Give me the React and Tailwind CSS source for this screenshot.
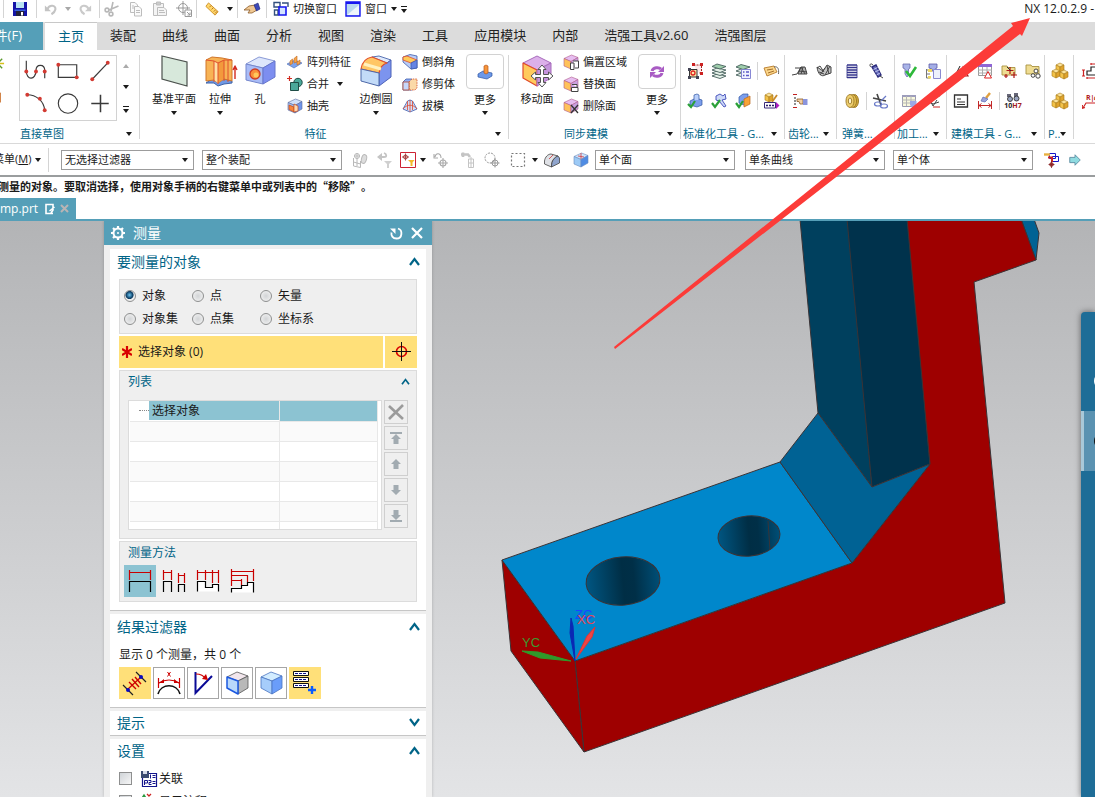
import React, { useState } from "react";

/* cube used by many of the modelling icons */
const Cube = ({ top = "#dbe8ff", left = "#a9c4fb", right = "#6f8ff0", line = "#5a6a9a" }) => (
  <g stroke={line} strokeWidth="0.6" strokeLinejoin="round">
    <path d="M1 4.500 L8.500 1 L15 3.500 L8 7.500 Z" fill={top} />
    <path d="M1 4.500 L8 7.500 L8 15 L1 12 Z" fill={left} />
    <path d="M8 7.500 L15 3.500 L15 11 L8 15 Z" fill={right} />
  </g>
);

const MiniCube = ({ x, y, fill = "#f3c34a" }) => (
  <g transform={`translate(${x} ${y})`} stroke="#a87a1a" strokeWidth="0.6" strokeLinejoin="round">
    <path d="M0 2 L4 0 L8 2 L4 4 Z" fill="#fbe39a" />
    <path d="M0 2 L4 4 L4 9 L0 7 Z" fill={fill} />
    <path d="M4 4 L8 2 L8 7 L4 9 Z" fill="#dfa32c" />
  </g>
);

const icons = {
  save: (
    <g>
      <path d="M1 1 H15 V15 H1 Z" fill="#1414a8" />
      <path d="M4 1 H12 V7 H4 Z" fill="#b9e4f2" />
      <path d="M2.500 8.500 H13.500 V10 H2.500 Z" fill="#3b66e0" />
      <path d="M4 10 H12 V15 H4 Z" fill="#23233a" />
      <path d="M9 11 H11 V14.500 H9 Z" fill="#fff" />
    </g>
  ),
  undo: (
    <g>
      <path d="M4 8 C6 2.500 14 3.500 13 8.500 C12.500 11 11 12.500 8.500 14" fill="none" stroke="#c4c4c4" strokeWidth="2.400" />
      <path d="M1 4 V10.500 H8 Z" fill="#c4c4c4" />
    </g>
  ),
  redo: (
    <g>
      <path d="M12 8 C10 2.500 2 3.500 3 8.500 C3.500 11 5 12.500 7.500 14" fill="none" stroke="#cacaca" strokeWidth="2.400" />
      <path d="M15 4 V10.500 H8 Z" fill="#cacaca" />
    </g>
  ),
  cut: (
    <g fill="none" stroke="#b8b8b8" strokeWidth="1.600">
      <path d="M9 1 L7 10 M14.500 5 L5 9" />
      <circle cx="3" cy="9" r="1.900" />
      <circle cx="7" cy="13" r="1.900" />
    </g>
  ),
  copy: (
    <g fill="#fafafa" stroke="#bdbdbd">
      <path d="M2.500 1.500 H7 L9.500 4 V11.500 H2.500 Z" />
      <path d="M6.500 5.500 H11 L13.500 8 V15 H6.500 Z" />
      <path d="M8 9.500 H12 M8 11.500 H12 M4 5 H6 M4 7 H6" />
    </g>
  ),
  paste: (
    <g fill="#f4f4f4" stroke="#bdbdbd">
      <path d="M1.500 2.500 H11.500 V14.500 H1.500 Z" />
      <path d="M4.500 1 H8.500 V4 H4.500 Z" fill="#ccc" />
      <path d="M5.500 6.500 H12 L14.500 9 V14.500 H5.500 Z" />
      <path d="M7 9.500 H12 M7 11.500 H13" />
    </g>
  ),
  target: (
    <g fill="none" stroke="#999">
      <circle cx="7" cy="7" r="4.500" />
      <path d="M7 0 V14 M0 7 H14" />
      <path d="M9 9 H15.500 V15.500 H9 Z" fill="#fff" />
      <path d="M11 11 L14 14 M14 11.500 V14 H11.500" />
    </g>
  ),
  ruler: (
    <g>
      <path d="M4 1 L15 11 L11.500 15 L1 5 Z" fill="#ffd76a" stroke="#c98a20" />
      <path d="M5 6 L7 4 M7.500 8.500 L9.500 6.500 M10 11 L12 9 M11.500 13 L14 10.500" stroke="#b0681a" />
    </g>
  ),
  pointer: (
    <g>
      <path d="M0 9 L5 5 L11 4 L13 9 L8 12 L4 12 L6 9 Z" fill="#f0c893" stroke="#8a5a28" strokeWidth="0.800" />
      <path d="M10 4 L14 2 L16 8 L12.500 10 Z" fill="#3d49b8" stroke="#1e2470" strokeWidth="0.600" />
    </g>
  ),
  windows: (
    <g fill="none" strokeWidth="1.400">
      <path d="M1 1.500 H7 V6 H1 Z M9 2 H15 V6 M1.500 9 H5 V14 H1.500 Z" stroke="#33507e" />
      <path d="M6 6 H13 V14 H6 Z" fill="#d4e4ff" stroke="#1616f0" strokeWidth="1.600" />
    </g>
  ),
  window: (
    <g>
      <path d="M1 1 H15 V15 H1 Z" fill="#b9d9f0" stroke="#1616f0" strokeWidth="1.400" />
      <path d="M1 1 H15 V3 H1 Z" fill="#1616f0" />
      <path d="M2 14 L14 4 V14 Z" fill="#eef6fb" />
    </g>
  ),
  star: (
    <g strokeWidth="1.500">
      <path d="M8 1 V15 M1 8 H15" stroke="#d8c018" />
      <path d="M3 3 L13 13 M13 3 L3 13" stroke="#5b9a2c" />
    </g>
  ),
  sketch: <path d="M0 2 H11 V12 H0 Z" fill="#f6d9a0" stroke="#c4641c" />,
  plane: <path d="M4 1 L29 7 V31 L4 24 Z" fill="#d7e8db" stroke="#4b514d" strokeWidth="1.200" />,
  extrude: (
    <g strokeLinejoin="round">
      <path d="M2 28 L8 24 H20 L28 26 V28 L20 29 L14 31 L10 28 Z" fill="#6f98e4" stroke="#3d62a8" />
      <path d="M2 5 L8 2 L18 3 L28 5 V26 L20 24 L14 28 L10 25 L2 26 Z" fill="#f7b355" stroke="#d0762a" />
      <path d="M10 6 L14 8 V28 L10 25 Z" fill="#ffe0a4" />
      <path d="M14 8 L20 5 V24 L14 28 Z" fill="#f39a3c" />
      <path d="M2 5 L10 6 L14 8 L20 5 L28 5 M10 6 V27 M14 8 V29 M20 5 V26 M24 5 V27" fill="none" stroke="#e0502c" />
      <path d="M31 24 V12 M29 15 L31 11 L33 15" stroke="#d22b20" strokeWidth="1.400" fill="none" />
    </g>
  ),
  hole: (
    <g strokeLinejoin="round">
      <path d="M2 9 L15 2 L31 6 L19 13 Z" fill="#dde6fb" stroke="#8a9ad6" />
      <path d="M2 9 L19 13 V29 L2 25 Z" fill="#a9bcf7" stroke="#7486cc" />
      <path d="M19 13 L31 6 V22 L19 29 Z" fill="#7d8ef0" stroke="#6676cc" />
      <circle cx="11" cy="19" r="5" fill="#f98f3a" stroke="#cc3c24" strokeWidth="1.300" />
      <circle cx="12" cy="20" r="2.500" fill="#ffc85c" />
    </g>
  ),
  edgeBlend: (
    <g strokeLinejoin="round">
      <path d="M12 2 L19 1 L31 5 L27 8 Z" fill="#dfeafc" stroke="#5a74b4" />
      <path d="M19 18 C20 12 23 9 27 8 L31 5 V22 L19 31 Z" fill="#7c94ee" stroke="#4d62b8" />
      <path d="M1 14 C2 7 6 3 12 2 L27 8 C23 9 20 12 19 18 Z" fill="#ffc665" stroke="#e2502c" strokeWidth="1.200" />
      <path d="M4 9 L21 14" stroke="#fff1bf" strokeWidth="3" />
      <path d="M1 14 L19 18 V31 L1 26 Z" fill="#c3dbf8" stroke="#4d68a8" />
    </g>
  ),
  moveFace: (
    <g>
      <g strokeLinejoin="round">
        <path d="M2 8 L16 1 L30 8 L16 15 Z" fill="#dcb0ea" stroke="#a86cbc" />
        <path d="M2 8 L16 15 V31 L2 23 Z" fill="#ffca5c" stroke="#e04a2c" strokeWidth="1.200" />
        <path d="M16 15 L30 8 V23 L16 31 Z" fill="#c594dc" stroke="#a86cbc" />
      </g>
      <path
        d="M21 10 L25 14.500 H22.500 V19.500 H27.500 V17 L32 21 L27.500 25 V22.500 H22.500 V27.500 H25 L21 32 L17 27.500 H19.500 V22.500 H14.500 V25 L10 21 L14.500 17 V19.500 H19.500 V14.500 H17 Z"
        fill="#fff"
        stroke="#555"
      />
    </g>
  ),
  pattern: (
    <g stroke="#4468b4" strokeWidth="0.600">
      <path d="M0 10 L8 6 L15 9 L7 14 Z" fill="#7ca4f0" />
      <path d="M3 7 L5.500 5 V9.500 L3 11 Z M7 4.500 L10 2 V8 L7 9 Z M10 8 L13 6 V9.500 L10 11 Z" fill="#f7a54a" stroke="#c06a24" />
    </g>
  ),
  unite: (
    <g>
      <circle cx="11" cy="6.500" r="4.200" fill="#4aa89a" stroke="#1f4d46" />
      <path d="M3.500 6.500 H11.500 V14.500 H3.500 Z" fill="#4aa89a" stroke="#1f4d46" />
      <path d="M2.500 0 V5 M0 2.500 H5" stroke="#d22b20" strokeWidth="1.200" />
    </g>
  ),
  shell: (
    <g>
      <Cube top="#d0e0fb" left="#a4c0f6" right="#6f94ea" />
      <path d="M2 7 L7 9 V14 L2 11.500 Z" fill="#f7863c" stroke="#c2481c" strokeWidth="0.700" />
      <path d="M7 6 L11 8 V13 L7 14 Z" fill="#ffd9b0" stroke="#c2481c" strokeWidth="0.700" />
    </g>
  ),
  chamfer: (
    <g strokeWidth="0.800">
      <path d="M1 3 L8 0.500 L15 2 V14 L9 15 L1 8 Z" fill="#b9cdf7" stroke="#3d5cac" />
      <path d="M1 3 L5 2 L15 6 L9 9 L1 6 Z" fill="#ffcb5a" stroke="#e04a2c" />
      <path d="M9 9 L15 6 V14 L9 15 Z" fill="#6484e4" stroke="#3d5cac" />
    </g>
  ),
  trim: (
    <g strokeWidth="0.800">
      <path d="M1 6 L4 3 H10 V14 H1 Z" fill="#8fadf4" stroke="#3d5cac" />
      <path d="M7 6 L10 3 H15 V12 L13 14 H7 Z" fill="#fbd9a8" stroke="#d24a24" strokeDasharray="1.500 1" />
      <path d="M1 6 H7 V14 H1 Z" fill="#c6d7fb" stroke="#b0442c" />
    </g>
  ),
  draft: (
    <g strokeWidth="0.800">
      <path d="M5.500 3 L8 2 L10.500 3 L15 11 L8 14 L1 11 Z" fill="#d0defc" stroke="#3d5cac" />
      <path d="M8 2 V14 M5.500 3 V12 M10.500 3 V12" stroke="#e04a2c" />
      <path d="M1 11 C5 6 11 6 15 11" fill="none" stroke="#e04a2c" />
    </g>
  ),
  moreFeature: (
    <g>
      <path d="M1 10 L6 7 L15 9 V12 L10 15 L1 13 Z" fill="#6c98e8" stroke="#2f54a0" strokeWidth="0.700" />
      <path d="M7 2 L9 1 L11 2 V9 L9 10 L7 9 Z" fill="#f6953a" stroke="#b8561a" strokeWidth="0.700" />
    </g>
  ),
  moreSync: (
    <g fill="none" stroke="#a95cc4" strokeWidth="3">
      <path d="M3 7 C4 3 10 3 12 5" />
      <path d="M13 9 C12 13 6 13 4 11" />
      <path d="M15 2 V8 H9 Z M1 14 V8 H7 Z" fill="#a95cc4" stroke="none" />
    </g>
  ),
  offsetFace: (
    <g>
      <Cube top="#e6bdf0" left="#ffc25a" right="#c9a0e0" line="#b05a8c" />
      <path d="M7.500 9 H11 V15.500 H7.500 Z M10 7 H15.500 V14 H12" fill="#fff" stroke="#444" />
    </g>
  ),
  replaceFace: (
    <g>
      <Cube top="#e6bdf0" left="#ffc25a" right="#c9a0e0" line="#b05a8c" />
      <path d="M8.500 11.500 H15 V15.500 H8.500 Z M9 8.500 H14 V11" fill="#fff" stroke="#444" />
    </g>
  ),
  deleteFace: (
    <g>
      <Cube top="#e6bdf0" left="#ffc25a" right="#c9a0e0" line="#b05a8c" />
      <path d="M8 7 L15 15 M15 7 L8 15" stroke="#333" strokeWidth="1.300" />
    </g>
  ),
  constraints: (
    <g fill="none" stroke="#a42020">
      <path d="M6.500 2 H14.500 V10 H12" fill="#fbeaea" strokeDasharray="2 1" />
      <path d="M2.500 6.500 H10 V14 H2.500 Z" fill="#ffe9a8" stroke="#333" />
      <circle cx="6" cy="10" r="2" stroke="#d22" strokeWidth="1.300" />
      <path d="M1 13 H4 V16 H1 Z M9 13 H12 V16 H9 Z M1 5 H4 V8 H1 Z" fill="#445" stroke="none" />
      <path d="M13 0 H16 V3 H13 Z M5 0 H8 V3 H5 Z M13 9 H16 V12 H13 Z" fill="#c22" stroke="none" />
    </g>
  ),
  layers: (
    <g fill="#e6f2ea" stroke="#46605c" strokeWidth="0.900">
      <path d="M1 13 L6 11 L15 13 L9 15.500 Z" />
      <path d="M1 10 L6 8 L15 10 L9 12.500 Z" />
      <path d="M1 7 L6 5 L15 7 L9 9.500 Z" />
      <path d="M1 3.500 L6 1 L15 3.500 L9 6 Z" fill="#9fceac" />
    </g>
  ),
  layerList: (
    <g fill="#e6f2ea" stroke="#46605c" strokeWidth="0.900">
      <path d="M1 12 L6 10 L13 12 L8 14 Z" />
      <path d="M1 8 L6 6 L13 8 L8 10 Z" />
      <path d="M1 4 L6 1.500 L15 4 L8 6.500 Z" fill="#9fceac" />
      <path d="M6.500 6.500 H15.500 V15.500 H6.500 Z" fill="#f2f3ff" stroke="#7a7ad0" />
      <path d="M8 9 H9.500 M11 9 H14 M8 12.500 H9.500 M11 12.500 H14" stroke="#5a5ac8" strokeWidth="1.300" />
    </g>
  ),
  tag: (
    <g>
      <path d="M1 5 L11 3 L14 9 L4 13 Z" fill="#fbd68a" stroke="#b87a2a" strokeWidth="0.900" />
      <path d="M4 7 L10 6 M5 10 L11 8" stroke="#9a6220" strokeWidth="0.900" />
      <path d="M11 4 C15 3 16 6 15.500 11" fill="none" stroke="#666" />
    </g>
  ),
  blockCheck: (
    <g>
      <path d="M3 8 L9 5 L15 7 V12 L10 14 L3 12 Z" fill="#7c9eec" stroke="#2f54a0" strokeWidth="0.700" />
      <path d="M7 7 V2 L10 1 L12 2 V7" fill="#b9cffb" stroke="#2f54a0" strokeWidth="0.700" />
      <path d="M1 11 L4 14 L8 8" fill="none" stroke="#2aa038" strokeWidth="2.200" />
    </g>
  ),
  toolCheck: (
    <g>
      <path d="M5 3 L9 1 L12 3 L14 1 L15 6 L11 7 L15 13 L13 14 L8 8 L5 7 Z" fill="#cdd8f8" stroke="#3d49b8" strokeWidth="0.900" />
      <path d="M1 10 L4 14 L9 7" fill="none" stroke="#2aa038" strokeWidth="2.200" />
    </g>
  ),
  partCheck: (
    <g>
      <path d="M4 4 L8 1 H13 V9 L9 12 L4 10 Z" fill="#7c9eec" stroke="#2f54a0" strokeWidth="0.700" />
      <path d="M9 6 L15 3 V11 L9 14 Z" fill="#f7a237" stroke="#b8661a" strokeWidth="0.700" />
      <path d="M1 10 L4 14 L8 8" fill="none" stroke="#2aa038" strokeWidth="2.200" />
    </g>
  ),
  partEdit: (
    <g>
      <MiniCube x={2} y={0} />
      <path d="M14 2 L9 9" stroke="#c88a2a" strokeWidth="1.800" />
      <path d="M1.500 9.500 H12.500 V15 H1.500 Z" fill="#fff" stroke="#3a2a7a" />
      <path d="M3 12.500 H11" stroke="#2a1a6a" strokeWidth="1.600" strokeDasharray="2 1" />
      <path d="M13 9 L16.500 12.500 L13 16 Z" fill="#b020c0" />
    </g>
  ),
  gearA: (
    <g fill="none" stroke="#444">
      <path d="M6 11 L9 4 H13 L15 11 Z" fill="#b0b0b0" />
      <path d="M0 12 L5 11 L9 4 M3 5 H9 M7 8 L15 9 M9 4 L13 11 M11 4 L9 11" />
    </g>
  ),
  gearB: (
    <g fill="none" stroke="#444">
      <path d="M1 4 C2 12 6 14 9 12 L15 10 L15 4 L11 2 L7 8 Z" fill="#c4c4c4" />
      <path d="M1 5 L4 3 L8 9 M4 12 L9 5 M9 12 L14 3 M11 3 L13 11 M3 9 L8 11" />
    </g>
  ),
  gearC: (
    <g>
      <path d="M1 1.500 H5 M1 14.500 H5" stroke="#c22020" strokeWidth="1.200" />
      <path d="M2 5 H4 M2 8 H4 M2 11 H4" stroke="#222" strokeWidth="1.200" />
      <path d="M5 6 H11 V11 H8 L7 8.500 H5 Z" fill="#f2cfa2" stroke="#8a5a28" strokeWidth="0.800" />
      <path d="M11 6 H15.500 V12 H11 Z" fill="#8a94dc" />
    </g>
  ),
  springA: (
    <g fill="none" stroke="#34348c" strokeWidth="1.600">
      <path d="M3 2 H13 M3 4.500 H13 M3 7 H13 M3 9.500 H13 M3 12 H13 M3 14.500 H13" />
      <path d="M3 2 V15 M13 2 V15" strokeWidth="0.800" />
    </g>
  ),
  springB: (
    <g>
      <path d="M4 4 L8 2 L13 12 L10 14 Z" fill="#6a70c0" stroke="#2c2c7c" strokeWidth="1.400" />
      <path d="M5.500 6.500 L9.500 4.500 M7 9 L11 7 M8.500 12 L12 10" stroke="#c9cdf4" strokeWidth="0.900" />
      <path d="M5 2 C2 -1 1 3 3 4 M12 13 L15 15" fill="none" stroke="#444" />
    </g>
  ),
  disc: (
    <g stroke="#9a7624" strokeWidth="0.900">
      <ellipse cx="10.500" cy="8" rx="4" ry="6.500" fill="#d0a83a" />
      <ellipse cx="8.500" cy="8" rx="4" ry="6.500" fill="#e4c052" />
      <ellipse cx="6" cy="8" rx="4" ry="6.500" fill="#f0d070" />
      <ellipse cx="6" cy="8" rx="1.700" ry="3" fill="#fff6d0" />
    </g>
  ),
  springCut: (
    <g fill="none">
      <path d="M1 5 L14 8 M5 1 L9 12" stroke="#444" strokeWidth="1.600" />
      <ellipse cx="6" cy="11" rx="3.500" ry="2" stroke="#6a7ac8" strokeWidth="1.200" />
      <ellipse cx="12" cy="13" rx="3.500" ry="2" stroke="#6a7ac8" strokeWidth="1.200" />
      <path d="M9 8 L14 3" stroke="#6a7ac8" strokeWidth="1.200" />
    </g>
  ),
  toolOk: (
    <g>
      <path d="M2 1 H9 V5 L7.500 6 V12 L6 14 L4 11 V6 L2 5 Z" fill="#a9b4e8" stroke="#6a6aac" strokeWidth="0.800" />
      <path d="M5 8 L9 13 L15 4" fill="none" stroke="#2db83a" strokeWidth="2.600" />
    </g>
  ),
  toolList: (
    <g>
      <path d="M4 1 H12 V5 L10 6 V8 H7 V6 L4 5 Z" fill="#a4aee6" stroke="#5a5aa8" strokeWidth="0.800" />
      <path d="M1.500 6 V15 H5 M1.500 11 H5 M1.500 7 H4" fill="none" stroke="#777" />
      <path d="M8.500 6.500 H15.500 V15.500 H8.500 Z" fill="#eef1fc" stroke="#8a8ad0" />
      <path d="M3 6 H7 V9 H3 Z M3 13 H6 V15.500 H3 Z" fill="#f1da60" />
    </g>
  ),
  toolTable: (
    <g>
      <path d="M1.500 2.500 H14.500 V13.500 H1.500 Z" fill="#f8f8dc" stroke="#9a9ab0" />
      <path d="M1 2 H15 V4 H1 Z" fill="#9d9dbc" />
      <path d="M1 7 H15 M1 10 H10 M5.500 3 V13 M10 3 V8" stroke="#b4b4b4" />
      <path d="M9 8 H15.500 V12 L12 15.500 L9 12 Z" fill="#9da8e4" />
    </g>
  ),
  flow: (
    <g fill="none" stroke="#444">
      <path d="M2 3 L8 5 L14 2 M2 8 L8 11 L14 9 M4 5 L8 13 L12 7" />
      <path d="M8 14 L15 14" stroke="#c22" />
      <path d="M11 4 L15 2" stroke="#28a040" strokeWidth="2" />
    </g>
  ),
  triangle: (
    <g fill="none">
      <path d="M7 3 L2 13 H7" stroke="#222" />
      <path d="M10 4 L15 13 H6 Z" stroke="#a42020" strokeWidth="1.200" />
    </g>
  ),
  tableTri: (
    <g>
      <path d="M1.500 1.500 H14.500 V12.500 H1.500 Z" fill="#fff" stroke="#999" />
      <path d="M1 1 H15 V4 H1 Z" fill="#8f66d4" />
      <path d="M1 7 H15 M1 10 H15 M5.500 4 V12 M10 4 V12" stroke="#aaa" />
      <path d="M11 8.500 L14.500 15 H7.500 Z" fill="#fff" stroke="#d22" />
    </g>
  ),
  folderPlus: (
    <g>
      <path d="M1 3 H6 L7 4.500 H14 V12 H1 Z" fill="#efdc92" stroke="#a8923e" strokeWidth="0.900" />
      <path d="M9 4 V11 M5.500 7.500 H12.500 M13 9 V15 M10 12 H16 M5 11 V15 M3 13 H7" stroke="#b01818" strokeWidth="1.200" />
      <path d="M6 4 L10 8" stroke="#333" />
    </g>
  ),
  folderGear: (
    <g>
      <path d="M1 2 H6 L7 3.500 H14 V11 H1 Z" fill="#efdc92" stroke="#a8923e" strokeWidth="0.900" />
      <g fill="#fff" stroke="#444">
        <circle cx="11" cy="8" r="2" />
        <circle cx="13" cy="13" r="2.200" />
        <circle cx="8" cy="12.500" r="1.800" />
      </g>
    </g>
  ),
  note: (
    <g>
      <path d="M1.500 2 H14.500 V14 H1.500 Z" fill="#fff" stroke="#333" strokeWidth="1.300" />
      <path d="M4 6 H8 M4 9 H12 M4 11.500 H12" stroke="#333" />
    </g>
  ),
  dimBrush: (
    <g>
      <path d="M13 0 L9 5" stroke="#e0a040" strokeWidth="2.400" />
      <path d="M6 4 L11 6 L8 9 L4 8 Z" fill="#9aa4dc" stroke="#5a66b0" strokeWidth="0.700" />
      <path d="M1.500 8 V16 M14.500 8 V16 M2 12.500 H14 M4.500 10.500 L2 12.500 L4.500 14.500 M11.500 10.500 L14 12.500 L11.500 14.500" fill="none" stroke="#c22828" />
    </g>
  ),
  fitSearch: (
    <g>
      <path d="M2 1 H6 V4 H2 Z M9 0 H13 V4 H9 Z" fill="#667" />
      <circle cx="5" cy="6" r="2.500" fill="#9aa4c0" stroke="#333" strokeWidth="0.900" />
      <circle cx="11.500" cy="5.500" r="2.500" fill="#9aa4c0" stroke="#333" strokeWidth="0.900" />
    </g>
  ),
  blocks: (
    <g>
      <MiniCube x={4} y={0} />
      <MiniCube x={0} y={6} />
      <MiniCube x={8} y={7} />
    </g>
  ),
  dimSet: (
    <g fill="none" strokeWidth="1.200">
      <path d="M5 8 H9 V4 H15 V12 H5 Z" stroke="#222" />
      <path d="M9 1 H15 M1.500 7 V13 M5 15 H15 M0 7 H3 M0 13 H3 M9 0 V2 M5 14 V16" stroke="#c22" />
    </g>
  ),
  leader: <path d="M1 15 L4 10 H16 M0 15.500 L0.500 12 M0 15.500 L3 14.500" fill="none" stroke="#c22" strokeWidth="1.100" />,
  selTree: (
    <g fill="none" stroke="#b8b8b8">
      <path d="M1.500 6 V14 L8.500 15.500 V9 M1.500 10 L8.500 12 M5 1 V14 M2 4 H8" />
      <circle cx="5" cy="4" r="2.500" />
      <ellipse cx="12" cy="7" rx="2.500" ry="4.500" fill="#ddd" transform="rotate(15 12 7)" />
    </g>
  ),
  selFilter: (
    <g>
      <path d="M1 5 L6 1 V9 Z" fill="#c4c4c4" />
      <path d="M6 5 H8 C11 5 11 2 8 1" fill="none" stroke="#c4c4c4" strokeWidth="1.800" />
      <path d="M8 9 H16 L13 12 V16 H11 V12 Z" fill="#d0d0d0" />
    </g>
  ),
  selTarget: (
    <g>
      <path d="M0.500 0.500 H15.500 V15.500 H0.500 Z" fill="#fff" stroke="#cc2233" />
      <circle cx="5.500" cy="5" r="2" fill="none" stroke="#a44" />
      <path d="M5.500 1.500 V8.500 M2 5 H9" stroke="#a44" />
      <path d="M8 8 H14.500 L12.500 10.500 V14 H10.500 V10.500 Z" fill="#f2b92c" />
    </g>
  ),
  snapUndo: (
    <g fill="none" stroke="#aaa" strokeWidth="1.100">
      <path d="M2 5 C3 0 8 1 8 6 M1 2 V6 H5" />
      <circle cx="10" cy="11" r="3" />
      <path d="M10 6 V16 M5 11 H15" />
    </g>
  ),
  snapTree: (
    <g fill="none" stroke="#c4c4c4">
      <path d="M1 2.500 H8 L10 5 M3 0.500 V5" strokeWidth="2.600" />
      <path d="M8.500 7 H13.500 V15.500 H8.500 Z M8.500 11 H13.500 M11 5 V15" />
    </g>
  ),
  snapGear: (
    <g fill="none" stroke="#999">
      <circle cx="6" cy="6" r="5" strokeDasharray="2 1" />
      <circle cx="11" cy="11" r="3" />
      <path d="M11 6.500 V15.500 M6.500 11 H15.500" />
    </g>
  ),
  marquee: <path d="M1.500 1.500 H14.500 V14.500 H1.500 Z" fill="none" stroke="#777" strokeDasharray="2 2" strokeWidth="1.200" />,
  shaded: (
    <g stroke="#444" strokeWidth="0.800" strokeLinejoin="round">
      <path d="M0.500 9 C1 5 4 2 7 2 L14 4 C11 5 8 8 7.500 12 V15 L0.500 12 Z" fill="#dfe1e6" />
      <path d="M7.500 15 C7.500 8 11 5 14 4 L15.500 6 V11 Z" fill="#8fa4cc" />
      <path d="M5 7 L9 3" stroke="#c33" />
    </g>
  ),
  solidBlue: (
    <g>
      <Cube top="#cfe4fa" left="#9ccaf6" right="#4f8ce4" line="#6a8cc0" />
      <path d="M8 1 V7 M5 4 L11 5" stroke="#d04a50" strokeWidth="0.900" />
    </g>
  ),
  route: (
    <g fill="none">
      <path d="M6.500 1.500 H12.500 V6.500 H6.500 Z M9.500 4.500 H15.500 V9.500 H9.500 Z" stroke="#1616c8" />
      <path d="M1 2.500 H7" stroke="#e8b040" strokeWidth="2.400" />
      <path d="M5 5.500 H9 V10" stroke="#c22" strokeWidth="2" />
      <circle cx="8.500" cy="12.500" r="1.800" fill="#c66" stroke="#822" />
      <path d="M8.500 9 V16 M5.500 12.500 H11.500" stroke="#822" strokeWidth="0.800" />
    </g>
  ),
  next: <path d="M2 5 H8 V2 L14 8 L8 14 V11 H2 Z" fill="#8fdbe0" stroke="#5a8aa0" />,
  listTop: <path d="M2 2 H14 V4 H2 Z M8 4 L13 9 H10.500 V14 H5.500 V9 H3 Z" fill="#a2abb1" />,
  listUp: <path d="M8 3 L13 8 H10.500 V13 H5.500 V8 H3 Z" fill="#a2abb1" />,
  listDown: <path d="M8 13 L13 8 H10.500 V3 H5.500 V8 H3 Z" fill="#a2abb1" />,
  listBottom: <path d="M2 12 H14 V14 H2 Z M8 12 L13 7 H10.500 V2 H5.500 V7 H3 Z" fill="#a2abb1" />,
  remove: <path d="M1 2 L15 15 M15 1 L1 15" stroke="#9b9b9b" strokeWidth="2.600" />,
  p2: (
    <g>
      <path d="M1.500 2.500 H15.500 V15.500 H1.500 Z" fill="#fff" stroke="#14148c" strokeWidth="1.200" />
      <path d="M0 0 H8 V7 H0 Z" fill="#3a4a70" />
      <path d="M2 0 H6 V3 H2 Z" fill="#d5dae8" />
      <path d="M9.500 3.500 V7.500 M11.500 4.500 H14.500 M11.500 6.500 H14.500 M11.500 10.500 H14.500 M11.500 12.500 H14.500" stroke="#14148c" />
      <path d="M3.500 14 V9.500 H6.500 V12 H4 M7.500 9.500 H10 V11.500 H8 V13.500 H10.500" fill="none" stroke="#14148c" />
    </g>
  ),
  axisNote: (
    <g fill="none" strokeWidth="1.300">
      <path d="M3 15 V1 M1 4 L3 1 L5 4" stroke="#2a9a40" />
      <path d="M6 0 L10 4 M10 0 L6 4" stroke="#c22" />
      <path d="M3 10 H14" stroke="#222" />
    </g>
  ),
};

const Icon = ({ name, size = 16, box = 16 }) => (
  <svg width={size} height={size} viewBox={`0 0 ${box} ${box}`} className="shrink-0 overflow-visible" aria-hidden="true">
    {icons[name]}
  </svg>
);

const Caret = ({ color = "#1a1a1a" }) => (
  <svg width="6" height="4" viewBox="0 0 6 4" className="shrink-0" aria-hidden="true">
    <path d="M0 0 H6 L3 4 Z" fill={color} />
  </svg>
);

const VLine = () => <span className="w-px h-[18px] bg-[#d4d4d4] shrink-0"></span>;

const Tool = ({ name, w = "w-6", size = 16 }) => (
  <button type="button" aria-label={name} className={`${w} h-5 flex items-center justify-center shrink-0`}>
    <Icon name={name} size={size} />
  </button>
);

const TitleBar = () => (
  <header className="h-[22px] pb-1 flex items-center bg-white text-[11px] text-[#1a1a1a] shrink-0 whitespace-nowrap">
    <span className="w-[3px] shrink-0"></span>
    <VLine />
    <Tool name="save" w="w-8" />
    <VLine />
    <Tool name="undo" w="w-7" size={14} />
    <Caret color="#a8a8a8" />
    <Tool name="redo" w="w-7" size={14} />
    <VLine />
    <Tool name="cut" />
    <Tool name="copy" />
    <Tool name="paste" />
    <Tool name="target" />
    <VLine />
    <Tool name="ruler" w="w-[30px]" size={14} />
    <Caret />
    <span className="w-1 shrink-0"></span>
    <VLine />
    <Tool name="pointer" w="w-7" />
    <VLine />
    <button type="button" className="flex items-center gap-1 pl-1.5 pr-2 h-[18px]">
      <Icon name="windows" />切换窗口
    </button>
    <button type="button" className="flex items-center gap-1 h-[18px]">
      <Icon name="window" />窗口
      <Caret />
    </button>
    <button type="button" aria-label="工具条选项" className="flex flex-col items-center gap-0.5 ml-1">
      <span className="w-1.5 h-px bg-[#1a1a1a]"></span>
      <Caret />
    </button>
    <span className="ml-auto pr-px text-[12px] leading-[18px]">NX 12.0.2.9 -</span>
  </header>
);

const tabs = ["主页", "装配", "曲线", "曲面", "分析", "视图", "渲染", "工具", "应用模块", "内部", "浩强工具v2.60", "浩强图层"];

const TabBar = () => {
  const [active, setActive] = useState("主页");
  return (
    <nav className="h-7 flex bg-[#dcdcdc] text-[13px] text-[#222] shrink-0 whitespace-nowrap">
      <button type="button" className="w-[43px] h-7 mr-0.5 pr-[21px] flex items-center justify-end overflow-hidden bg-[#559fb8] text-white shrink-0">
        文件(F)
      </button>
      {tabs.map((tab) => (
        <button
          key={tab}
          type="button"
          onClick={() => setActive(tab)}
          className={
            tab === active
              ? "h-7 px-[13px] bg-white border-t border-[#c8c8c8] text-[#006487]"
              : "h-7 px-[13px]"
          }
        >
          {tab}
        </button>
      ))}
    </nav>
  );
};

/* ribbon building blocks */
const Group = ({ w, label, labelClass = "pl-1", children }) => (
  <section className={`${w} flex flex-col shrink-0 relative`}>
    <div className="h-[75px] flex shrink-0">{children}</div>
    <div className="h-[18px] flex items-center pr-2 text-[11px] leading-[18px] text-[#006487]">
      <span className={`flex-1 overflow-hidden ${labelClass}`}>{label}</span>
      <Caret />
    </div>
    <span className="absolute right-0 top-[5px] bottom-1 w-px bg-[#d6d6d6]"></span>
  </section>
);

const BigButton = ({ w, icon, label, caret }) => (
  <button type="button" className={`${w} pt-[5px] flex flex-col items-center shrink-0`}>
    <Icon name={icon} size={32} box={32} />
    <span className="text-[11px] leading-6">{label}</span>
    {caret && <Caret />}
  </button>
);

const MoreButton = ({ icon }) => (
  <button type="button" className="w-[38px] pt-1 flex flex-col items-center shrink-0">
    <span className="w-[38px] h-[35px] rounded border border-[#d2d2d2] flex items-center justify-center">
      <Icon name={icon} />
    </span>
    <span className="text-[11px] leading-[22px]">更多</span>
    <Caret />
  </button>
);

const Stack = ({ w, items }) => (
  <div className={`${w} pt-px flex flex-col shrink-0`}>
    {items.map((item) => (
      <button key={item.label} type="button" className="h-[22px] flex items-center gap-1 text-[11px]">
        <Icon name={item.icon} />
        {item.label}
        {item.caret && <span className="pl-1"><Caret /></span>}
      </button>
    ))}
  </div>
);

const IconRows = ({ rows }) => (
  <div className="pt-1.5 flex flex-col">
    {rows.map((row, i) => (
      <div key={i} className="h-[30px] flex items-center">
        {row.map((name) =>
          name === "|" ? (
            <span key={name} className="w-1 flex justify-center"><VLine /></span>
          ) : (
            <Tool key={name} name={name} />
          )
        )}
      </div>
    ))}
  </div>
);

const SketchGallery = () => (
  <svg width="98" height="66" viewBox="0 0 98 66" className="border border-[#d2d2d2] box-border" aria-label="草图曲线">
    <g fill="none" stroke="#3a3a3a" strokeWidth="1.200">
      <path d="M6 5 V15 C6 26 16 25 16 15 C16 8 25 8 25 15 V23" />
      <path d="M39 9 H58 V22 H39 Z" />
      <path d="M74 24 L90 7" />
      <path d="M7 40 C16 40 24 46 25 56" />
      <circle cx="49" cy="49" r="10" />
      <path d="M82.500 40 V58 M73 49 H91" strokeWidth="1.600" />
    </g>
    <g fill="#d23a32">
      <circle cx="6" cy="16" r="2" />
      <circle cx="16" cy="16" r="2" />
      <circle cx="25" cy="16" r="2" />
      <circle cx="39" cy="9" r="2" />
      <circle cx="58" cy="22" r="2" />
      <circle cx="74" cy="24" r="2" />
      <circle cx="90" cy="7" r="2" />
      <circle cx="7" cy="40" r="2" />
      <circle cx="20" cy="44" r="2" />
      <circle cx="25" cy="56" r="2" />
    </g>
  </svg>
);

const Ribbon = () => (
  <div className="h-[94px] flex bg-white border-b border-[#d9d9d9] text-[#1a1a1a] overflow-hidden shrink-0 whitespace-nowrap">
    <Group w="w-[140px]" label="直接草图" labelClass="pl-5">
      <div className="w-[19px] pt-1.5 flex flex-col items-start gap-5 overflow-hidden shrink-0">
        <span className="-ml-2.5"><Icon name="star" size={15} /></span>
        <span className="-ml-2.5"><Icon name="sketch" size={15} /></span>
      </div>
      <div className="pt-[5px]"><SketchGallery /></div>
      <div className="pl-1.5 pt-3.5 pb-3 flex flex-col justify-between">
        <svg width="6" height="4" viewBox="0 0 6 4"><path d="M0 4 H6 L3 0 Z" fill="#aaa" /></svg>
        <Caret />
        <span className="flex flex-col gap-0.5">
          <span className="w-1.5 h-px bg-[#1a1a1a]"></span>
          <Caret />
        </span>
      </div>
    </Group>

    <Group w="w-[369px]" label="特征" labelClass="pr-1 text-center">
      <span className="w-1 shrink-0"></span>
      <BigButton w="w-[60px]" icon="plane" label="基准平面" caret />
      <BigButton w="w-8" icon="extrude" label="拉伸" caret />
      <BigButton w="w-12" icon="hole" label="孔" />
      <Stack
        w="w-[73px] pl-[3px]"
        items={[
          { icon: "pattern", label: "阵列特征" },
          { icon: "unite", label: "合并", caret: true },
          { icon: "shell", label: "抽壳" },
        ]}
      />
      <BigButton w="w-[38px]" icon="edgeBlend" label="边倒圆" caret />
      <Stack
        w="w-[71px] pl-[7px]"
        items={[
          { icon: "chamfer", label: "倒斜角" },
          { icon: "trim", label: "修剪体" },
          { icon: "draft", label: "拔模" },
        ]}
      />
      <MoreButton icon="moreFeature" />
    </Group>

    <Group w="w-[172px]" label="同步建模" labelClass="pr-1 text-center">
      <span className="w-0.5 shrink-0"></span>
      <BigButton w="w-[52px]" icon="moveFace" label="移动面" />
      <Stack
        w="w-[75px]"
        items={[
          { icon: "offsetFace", label: "偏置区域" },
          { icon: "replaceFace", label: "替换面" },
          { icon: "deleteFace", label: "删除面" },
        ]}
      />
      <MoreButton icon="moreSync" />
    </Group>

    <Group w="w-[104px] pl-0.5" label="标准化工具 - G..." labelClass="pl-0">
      <IconRows
        rows={[
          ["constraints", "layers", "layerList", "|", "tag"],
          ["blockCheck", "toolCheck", "partCheck", "|", "partEdit"],
        ]}
      />
    </Group>
    <Group w="w-[52px] pl-[3px]" label="齿轮..." labelClass="pl-0">
      <IconRows rows={[["gearA", "gearB"], ["gearC"]]} />
    </Group>
    <Group w="w-[58px] pl-[3px]" label="弹簧..." labelClass="pl-0.5">
      <IconRows rows={[["springA", "springB"], ["disc", "|", "springCut"]]} />
    </Group>
    <Group w="w-[52px] pl-0.5" label="加工..." labelClass="pl-0">
      <IconRows rows={[["toolOk", "toolList"], ["toolTable", "flow"]]} />
    </Group>
    <Group w="w-[98px] pl-0.5" label="建模工具 - G..." labelClass="pl-0.5">
      <div className="pt-1.5 flex flex-col">
        <div className="h-[30px] flex items-center">
          <Tool name="triangle" />
          <Tool name="tableTri" />
          <Tool name="folderPlus" />
          <Tool name="folderGear" />
        </div>
        <div className="h-[30px] flex items-center">
          <Tool name="note" />
          <Tool name="dimBrush" />
          <span className="w-1 flex justify-center"><VLine /></span>
          <button type="button" className="w-6 flex flex-col items-center text-[7px] leading-[8px] font-bold">
            <svg width="16" height="9" viewBox="0 0 16 9" aria-hidden="true">{icons.fitSearch}</svg>
            <span>10<span className="text-[#a42020]">H7</span></span>
          </button>
        </div>
      </div>
    </Group>
    <Group w="w-[29px] pl-[3px]" label="P.." labelClass="pl-0">
      <IconRows rows={[["blocks"], ["blocks"]]} />
    </Group>
    <div className="pl-1 pt-1.5 flex flex-col shrink-0">
      <div className="h-[30px] flex items-center"><Tool name="dimSet" /></div>
      <div className="h-[30px] flex flex-col justify-center pl-1 text-[7px] leading-[7px] text-[#b02020] font-bold">
        <span className="pl-1">R|⌀</span>
        <svg width="16" height="8" viewBox="0 8 16 8" aria-hidden="true">{icons.leader}</svg>
      </div>
    </div>
  </div>
);

const Combo = ({ w, label, value }) => (
  <div className={`${w} relative shrink-0`}>
    <select aria-label={label} className="appearance-none w-full h-5 pl-[3px] pr-4 border border-[#9c9c9c] bg-white text-[11px] leading-[18px] text-[#1a1a1a]">
      <option>{value}</option>
    </select>
    <span className="absolute right-1.5 top-2 flex pointer-events-none"><Caret /></span>
  </div>
);

const SelectionBar = () => (
  <div className="h-[33px] flex items-center bg-white border-b-2 border-[#9a9d9e] text-[11px] text-[#1a1a1a] overflow-hidden shrink-0 whitespace-nowrap">
    <button type="button" className="-ml-[7px] w-[50px] flex items-center gap-1 shrink-0">
      <span>菜单(<u>M</u>)</span>
      <Caret />
    </button>
    <span className="w-[5px] shrink-0"></span>
    <span className="w-px h-6 bg-[#d4d4d4] mr-3 shrink-0"></span>
    <Combo w="w-[133px]" label="类型过滤器" value="无选择过滤器" />
    <span className="w-2 shrink-0"></span>
    <Combo w="w-[140px]" label="选择范围" value="整个装配" />
    <span className="w-1.5 shrink-0"></span>
    <Tool name="selTree" />
    <Tool name="selFilter" />
    <Tool name="selTarget" />
    <Caret />
    <Tool name="snapUndo" w="w-[30px]" />
    <Tool name="snapTree" w="w-6" />
    <Tool name="snapGear" w="w-6" />
    <Tool name="marquee" w="w-7" />
    <Caret />
    <Tool name="shaded" w="w-7" />
    <Tool name="solidBlue" w="w-[29px]" />
    <Combo w="w-[140px]" label="面规则" value="单个面" />
    <span className="w-2.5 shrink-0"></span>
    <Combo w="w-[140px]" label="曲线规则" value="单条曲线" />
    <span className="w-2 shrink-0"></span>
    <Combo w="w-[140px]" label="体规则" value="单个体" />
    <span className="w-1.5 shrink-0"></span>
    <Tool name="route" />
    <Tool name="next" size={14} />
  </div>
);

const FileTab = () => (
  <div className="h-[23px] flex border-b-2 border-[#559fb8] bg-white shrink-0">
    <div className="w-[76px] h-[21px] flex items-center bg-[#559fb8] text-white text-[12px] overflow-hidden">
      <span className="w-11 shrink-0">mp.prt</span>
      <svg width="12" height="12" viewBox="0 0 12 12" className="shrink-0" aria-hidden="true">
        <path d="M9 4 V1.500 H2 V10.500 H9 M5.500 8 L10.500 4 M9 4 V7 L7 10" fill="none" stroke="#fff" strokeWidth="1.600" />
      </svg>
      <button type="button" aria-label="关闭" className="ml-1">
        <svg width="9" height="9" viewBox="0 0 9 9">
          <path d="M1 1 L8 8 M8 1 L1 8" stroke="#b9b4b4" strokeWidth="2" />
        </svg>
      </button>
    </div>
  </div>
);

const Chevron = ({ down, small }) => (
  <svg width={small ? 9 : 11} height={small ? 7 : 9} viewBox="0 0 11 9" aria-hidden="true">
    <path d={down ? "M1 1 L5.500 7 L10 1" : "M1 8 L5.500 2 L10 8"} fill="none" stroke="#006487" strokeWidth="2.200" />
  </svg>
);

const Section = ({ title, down, className, children }) => (
  <section className={`mx-1.5 mb-[3px] bg-white border-b border-[#c6c6c6] ${className}`}>
    <button type="button" className="w-full h-6 pl-[7px] pr-1.5 pb-px flex items-center justify-between text-[14px] leading-6 text-[#006487]">
      {title}
      <Chevron down={down} />
    </button>
    {children}
  </section>
);

const kinds = ["对象", "点", "矢量", "对象集", "点集", "坐标系"];

const KindPicker = () => {
  const [kind, setKind] = useState("对象");
  return (
    <div className="h-[55px] pl-1 pt-1 grid grid-cols-[68px_68px_1fr] auto-rows-[23px] bg-[#efefef] border border-[#dcdcdc]">
      {kinds.map((k) => (
        <label key={k} className="flex items-center gap-1.5">
          <input
            type="radio"
            name="kind"
            checked={kind === k}
            onChange={() => setKind(k)}
            className="appearance-none w-3 h-3 rounded-full border border-[#8e8f8f] bg-[radial-gradient(circle,#d2d4d6,#f6f6f6)] checked:bg-[radial-gradient(circle_at_45%_40%,#6cc4f0_0,#12476e_38%,#0f3d62_45%,#eee_55%)]"
          />
          {k}
        </label>
      ))}
    </div>
  );
};

const listButtons = [
  ["remove", "移除"],
  ["listTop", "移至顶部"],
  ["listUp", "上移"],
  ["listDown", "下移"],
  ["listBottom", "移至底部"],
];

const ObjectList = () => (
  <div className="mt-0.5 h-[169px] bg-[#efefef] border border-[#dcdcdc]">
    <div className="h-[29px] pl-2 pr-1.5 pb-2 flex items-center justify-between text-[#006487]">
      列表
      <Chevron small />
    </div>
    <div className="pl-2 pr-2 flex gap-0.5">
      <div className="flex-1 h-[130px] pl-px pr-[3px] bg-white border border-[#dcdcdc] overflow-hidden">
        <table className="w-full border-collapse table-fixed">
          <tbody>
            <tr className="h-5 border-b border-[#e8e8e8]">
              <td className="w-[149px] p-0 border-r border-[#e8e8e8]">
                <div className="flex items-center h-[19px]">
                  <span className="w-2.5 ml-[9px] border-t border-dotted border-[#888]"></span>
                  <span className="flex-1 h-[19px] pl-[3px] leading-[19px] bg-[#8cc3d2]">选择对象</span>
                </div>
              </td>
              <td className="p-0 bg-[#8cc3d2] border-r border-[#e8e8e8]"></td>
            </tr>
            {[1, 2, 3, 4, 5, 6].map((row) => (
              <tr key={row} className="h-5 border-b border-[#e8e8e8] odd:bg-white even:bg-[#fafafa]">
                <td className="p-0 border-r border-[#e8e8e8]"></td>
                <td className="p-0 border-r border-[#e8e8e8]"></td>
              </tr>
            ))}
          </tbody>
        </table>
      </div>
      <div className="flex flex-col gap-0.5">
        {listButtons.map(([icon, label]) => (
          <button key={icon} type="button" aria-label={label} className="w-6 h-6 flex items-center justify-center border border-[#cfcfcf]">
            <Icon name={icon} />
          </button>
        ))}
      </div>
    </div>
  </div>
);

const methods = [
  {
    label: "单个",
    red: "M5.500 5 V15 M26.500 5 V15 M6 7.500 H26",
    black: "M5.500 27 V16.500 H26.500 V27",
  },
  {
    label: "成对",
    red: "M5.500 5 V15 M13.500 5 V15 M6 7.500 H13 M20.500 8 V18 M26.500 8 V18 M21 10.500 H26",
    black: "M5.500 27 V16.500 H13.500 V27 M20.500 27 V19.500 H26.500 V27",
  },
  {
    label: "链",
    red: "M5.500 5 V15 M13.500 5 V15 M20.500 5 V18 M26.500 5 V18 M6 7.500 H26",
    black: "M5.500 26.500 V16.500 H13.500 V22.500 H20.500 V19.500 H26.500 V26.500",
    fill: true,
  },
  {
    label: "基准",
    red: "M5.500 4 V21 M27.500 4 V16 M21.500 10 V17 M15.500 14 V20 M6 6.500 H27 M6 10.500 H21 M6 15.500 H15",
    black: "M5.500 27.500 V23.500 H15.500 V20.500 H21.500 V17.500 H27.500 V27.500",
    fill: true,
  },
];

const MethodPicker = () => {
  const [active, setActive] = useState("单个");
  return (
    <div className="mt-0.5 h-[61px] pl-1 bg-[#efefef] border border-[#dcdcdc]">
      <div className="h-[23px] pl-1 leading-[22px] text-[#006487]">测量方法</div>
      <div className="flex gap-0.5">
        {methods.map((m) => (
          <button
            key={m.label}
            type="button"
            aria-label={m.label}
            onClick={() => setActive(m.label)}
            className={active === m.label ? "w-8 h-8 bg-[#8cc3d2]" : "w-8 h-8"}
          >
            <svg width="32" height="32" viewBox="0 0 32 32" fill="none">
              <path d={m.black} stroke="#000" strokeWidth="1.200" fill={m.fill ? "#fff" : "none"} />
              <path d={m.red} stroke="#c80000" strokeWidth="1.200" />
            </svg>
          </button>
        ))}
      </div>
    </div>
  );
};

const filters = [
  {
    label: "距离",
    on: true,
    art: (
      <g fill="none">
        <path d="M9 22 L22 10" stroke="#c00" strokeWidth="1.200" />
        <path d="M10 15 L17 22 M13 12 L20 20 M16 10 L22 17" stroke="#c00" strokeWidth="1.400" />
        <path d="M4 18 L14 28 M17 5 L27 15" stroke="#222" strokeWidth="1.200" />
        <circle cx="9" cy="23" r="2" fill="#0a0ac0" />
        <circle cx="22" cy="10" r="2" fill="#0a0ac0" />
      </g>
    ),
  },
  {
    label: "曲线长度",
    art: (
      <g fill="none">
        <path d="M5 27 C8 16 24 16 27 27" stroke="#111" strokeWidth="1.600" />
        <path d="M5.500 11 V21 M26.500 11 V21 M6 16 C12 12 20 12 26 16" stroke="#c00" strokeWidth="1.200" />
        <path d="M6 16 L11 12 L11 16 Z M26 16 L21 12 L21 16 Z" fill="#c00" />
        <path d="M14.500 5 L17.500 9.500 M17.500 5 L14.500 9.500" stroke="#c00" />
      </g>
    ),
  },
  {
    label: "角度",
    art: (
      <g fill="none">
        <path d="M8.500 5 V26 L25 9" stroke="#0a0a96" strokeWidth="2" />
        <path d="M9 7 C14 7 17 9 19 12" stroke="#c00" strokeWidth="1.200" />
        <path d="M15 12 L21 13 L19 7 Z" fill="#c00" />
      </g>
    ),
  },
  {
    label: "面",
    art: (
      <g stroke="#555" strokeWidth="0.800" strokeLinejoin="round">
        <path d="M6 10 L16 5 L27 9 L17 14 Z" fill="#f2e6ec" />
        <path d="M17 14 L27 9 V21 L17 27 Z" fill="#b8b8b8" />
        <path d="M6 10 L17 14 V27 L6 21 Z" fill="#b8d8fb" stroke="#1b58e0" strokeWidth="1.500" />
      </g>
    ),
  },
  {
    label: "体",
    art: (
      <g stroke="#4a74c0" strokeWidth="0.800" strokeLinejoin="round">
        <path d="M6 10 L16 5 L27 9 L17 14 Z" fill="#d2ecff" />
        <path d="M6 10 L17 14 V27 L6 21 Z" fill="#a6cdfb" />
        <path d="M17 14 L27 9 V21 L17 27 Z" fill="#6a9dfa" />
      </g>
    ),
  },
  {
    label: "对象集",
    on: true,
    art: (
      <g>
        <path d="M4.500 4.500 H19.500 V8.500 H4.500 Z M4.500 10.500 H19.500 V14.500 H4.500 Z M4.500 16.500 H19.500 V20.500 H4.500 Z" fill="#fff" stroke="#111" />
        <path d="M6 6.500 H18 M6 12.500 H18 M6 18.500 H18" stroke="#14148c" strokeDasharray="3 1" />
        <path d="M23 19 V27 M19 23 H27" stroke="#0a5cff" strokeWidth="2.400" />
      </g>
    ),
  },
];

const MeasureDialog = () => (
  <div className="absolute left-[104px] top-0 bottom-0 w-[328px] bg-[#efefef] text-[12px] text-[#1a1a1a] overflow-hidden shadow-[0_0_3px_rgba(0,0,0,0.2)]">
    <div className="h-6 mb-1 pl-1.5 pr-[9px] flex items-center bg-[#559fb8] text-white text-[14px] leading-6">
      <svg width="16" height="16" viewBox="0 0 16 16" aria-hidden="true">
        <circle cx="8" cy="8" r="4.500" fill="none" stroke="#fff" strokeWidth="2" />
        <path d="M8 1 V3.500 M8 12.500 V15 M1 8 H3.500 M12.500 8 H15 M3 3 L5 5 M11 11 L13 13 M3 13 L5 11 M11 5 L13 3" stroke="#fff" strokeWidth="2.200" />
        <circle cx="8" cy="8" r="1" fill="#fff" />
      </svg>
      <span className="ml-[7px]">测量</span>
      <button type="button" aria-label="重置" className="ml-auto mr-2">
        <svg width="13" height="13" viewBox="0 0 13 13">
          <path d="M8 1.500 C13 3 12.500 11.500 6.500 11.500 C2.500 11.500 1 8.500 1.500 5.500" fill="none" stroke="#fff" strokeWidth="1.800" />
          <path d="M0 1.500 H5.500 V7 Z" fill="#fff" />
        </svg>
      </button>
      <button type="button" aria-label="关闭">
        <svg width="12" height="12" viewBox="0 0 12 12">
          <path d="M1 1 L11 11 M11 1 L1 11" stroke="#fff" strokeWidth="2.200" />
        </svg>
      </button>
    </div>

    <Section title="要测量的对象" className="pt-px pb-2">
      <div className="mx-[9px] mt-[5px]">
        <KindPicker />
        {/* active selection row */}
        <div className="mt-0.5 h-8 flex gap-0.5">
          <button type="button" className="flex-1 flex items-center bg-[#ffe079] text-left">
            <svg width="10" height="12" viewBox="0 0 10 12" className="ml-[3px] mr-1.5" aria-hidden="true">
              <path d="M5 0 V12 M0 3 L10 9 M10 3 L0 9" stroke="#d80000" strokeWidth="2.200" />
            </svg>
            选择对象 (0)
          </button>
          <button type="button" aria-label="点构造器" className="w-8 flex items-center justify-center bg-[#ffe079]">
            <svg width="20" height="20" viewBox="0 0 20 20" fill="none">
              <circle cx="10.500" cy="9.500" r="5" stroke="#d80000" strokeWidth="1.600" />
              <path d="M10.500 0 V19 M1 9.500 H20" stroke="#111" />
            </svg>
          </button>
        </div>
        <ObjectList />
        <MethodPicker />
      </div>
    </Section>

    <Section title="结果过滤器" className="pt-px pb-2">
      <div className="mx-[9px]">
        <p className="pt-1 h-7 leading-6">显示 0 个测量，共 0 个</p>
        <div className="flex gap-0.5">
          {filters.map((f) => (
            <button
              key={f.label}
              type="button"
              aria-label={f.label}
              className={f.on ? "w-8 h-8 bg-[#ffe079]" : "w-8 h-8 border border-[#a6a6a6] flex items-center justify-center"}
            >
              <svg width="32" height="32" viewBox="0 0 32 32" className="shrink-0">{f.art}</svg>
            </button>
          ))}
        </div>
      </div>
    </Section>

    <Section title="提示" down className="" />

    <Section title="设置" className="pb-2">
      <div className="mx-[9px] pt-1">
        <label className="h-[23px] flex items-center">
          <input type="checkbox" className="appearance-none w-[13px] h-[13px] border border-[#8e8f8f] bg-[linear-gradient(135deg,#d0d4d8,#f6f6f6)] mr-[9px]" />
          <Icon name="p2" />
          <span className="ml-0.5">关联</span>
        </label>
        <label className="h-[23px] flex items-center">
          <input type="checkbox" className="appearance-none w-[13px] h-[13px] border border-[#8e8f8f] bg-[linear-gradient(135deg,#d0d4d8,#f6f6f6)] mr-[9px]" />
          <Icon name="axisNote" />
          <span className="ml-0.5">显示注释</span>
        </label>
      </div>
    </Section>
  </div>
);

/* bracket model, drawn in viewport coordinates */
const Model = () => (
  <svg className="absolute inset-0 w-full h-full" aria-label="模型">
    <defs>
      <linearGradient id="bore">
        <stop offset="0" stopColor="#005682" />
        <stop offset="0.500" stopColor="#002e45" />
        <stop offset="0.650" stopColor="#002f47" />
        <stop offset="1" stopColor="#004f77" />
      </linearGradient>
    </defs>
    <g stroke="#3a3336" strokeWidth="1" strokeLinejoin="round">
      <path d="M800 -2 H848 L872 266 L818 192 Z" fill="#00405e" />
      <path d="M847 -2 H908 L930 243 L872 266 Z" fill="#00324c" />
      <path d="M1021 -2 H1034 L1039 12 L1036 39 Z" fill="#006294" />
      <path d="M907 -2 H1021 L1036 39 L974 61 L1005 382 L584 531 L575 440 L852 342 L930 243 Z" fill="#9e0000" />
      <path d="M502 339 L575 440 L584 531 L511 430 Z" fill="#9e0000" />
      <path d="M502 339 L780 241 L852 342 L575 440 Z" fill="#0087cb" />
      <path d="M780 241 L818 192 L872 266 L930 243 L852 342 Z" fill="#006294" />
      <ellipse cx="623" cy="360" rx="37" ry="24" fill="url(#bore)" transform="rotate(-5 623 360)" />
      <ellipse cx="749" cy="315" rx="31" ry="20" fill="url(#bore)" transform="rotate(-5 749 315)" />
      <path d="M768 300 L770 329" />
    </g>
    <path d="M571 397 L573 405 L575 440 L570 412 Z" fill="#0a28b4" stroke="#0a28b4" />
    <path d="M595 406 L592 416 L576 438 L587 415 Z" fill="#f04444" stroke="#e03434" />
    <path d="M522 430 L538 431 L571 440 L540 437 Z" fill="#2f9a2a" stroke="#2f9a2a" />
    <g fontSize="13" fontFamily="Liberation Sans, sans-serif">
      <text x="575" y="398" fill="#1846ff">ZC</text>
      <text x="577" y="403" fill="#e04858">XC</text>
      <text x="522" y="426" fill="#3a9a2e">YC</text>
    </g>
  </svg>
);

const SidePanel = () => (
  <aside className="absolute left-[1081px] right-0 top-[91px] bottom-0 pt-[99px] bg-[#1e6d97] rounded-tl overflow-hidden shadow-[0_0_6px_rgba(0,0,0,0.5)]">
    <div className="h-[60px] bg-[#5a92b1] border-l-[3px] border-[#a9c8d8]"></div>
    <svg className="absolute inset-0 w-full h-full" aria-hidden="true">
      <circle cx="21" cy="69" r="8" fill="#fff" />
      <circle cx="21" cy="129" r="8" fill="#111" />
    </svg>
  </aside>
);

export default function App() {
  return (
    <div lang="zh-CN" className="relative h-screen flex flex-col overflow-hidden bg-white font-['Open_Sans','Noto_Sans_CJK_SC',sans-serif]">
      <TitleBar />
      <TabBar />
      <Ribbon />
      <SelectionBar />
      <p className="h-[21px] leading-[19px] text-[11px] font-bold text-[#1a1a1a] bg-white whitespace-nowrap shrink-0 -ml-0.5 [text-spacing-trim:space-all] font-['Noto_Sans_CJK_SC',sans-serif]">
        测量的对象。要取消选择，使用对象手柄的右键菜单中或列表中的“移除”。
      </p>
      <FileTab />
      <main className="relative flex-1 overflow-hidden bg-[linear-gradient(#b3b4b6,#e3e4e6)]">
        <Model />
        <MeasureDialog />
        <SidePanel />
      </main>

      {/* callout arrow towards the version number */}
      <svg className="absolute inset-0 w-full h-full pointer-events-none" aria-hidden="true">
        <path d="M614 347 L1013 26 L1011 23 L1030 18 L1022 36 L1020 34 L615 349 Z" fill="#fc3b38" />
      </svg>
    </div>
  );
}
